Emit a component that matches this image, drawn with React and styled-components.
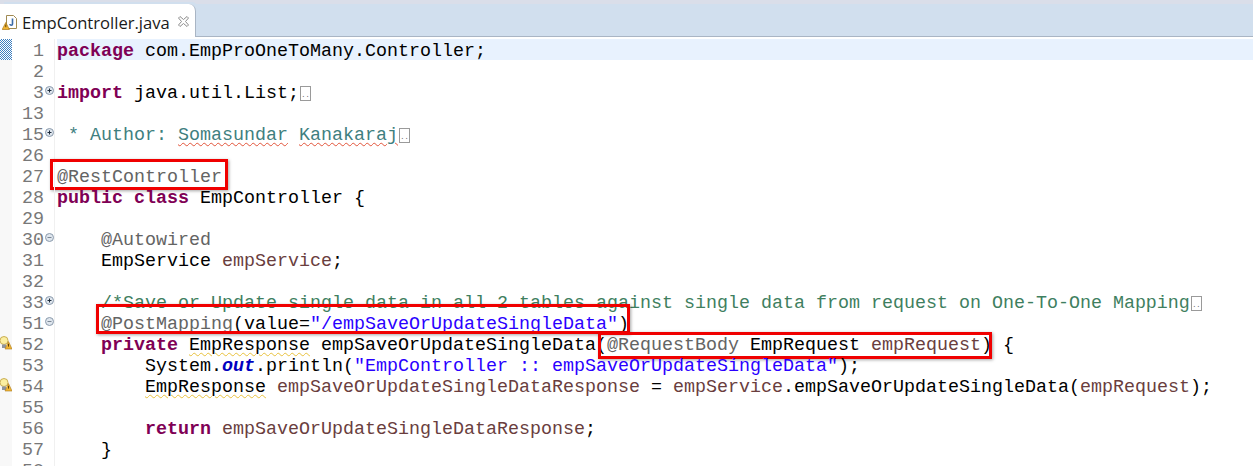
import React from "react"
import styled, { createGlobalStyle } from "styled-components"

const GlobalStyle = createGlobalStyle`
  html, body {
    margin: 0;
    padding: 0;
    background: #fff;
    overflow: hidden;
  }
`

const Editor = styled.div`
  width: 1253px;
  height: 466px;
  overflow: hidden;
  display: flex;
  flex-direction: column;
  background: #fff;
`
const TabStrip = styled.div`
  height: 39px;
  flex: none;
  box-sizing: border-box;
  display: flex;
  align-items: stretch;
  background: #fff;
  border-top: 4px solid #dadee9;
`
const Tab = styled.div`
  width: 196px;
  height: 33px;
  box-sizing: border-box;
  display: flex;
  align-items: center;
  gap: 5px;
  padding: 3px 0 0 2px;
  background: #fff;
  border-right: 1px solid #a9b5c4;
  border-top-right-radius: 7px;
  font-family: "Open Sans", "Liberation Sans", sans-serif;
  font-size: 16.6px;
  color: #1a1a1a;
  box-shadow: 3px -3px 0 -1px #d1dfee;
`
const TabFiller = styled.div`
  flex: 1;
  height: 33px;
  box-sizing: border-box;
  background: #d1dfee;
  border-bottom: 1px solid #a9b5c4;
`
const TabClose = styled.svg`
  width: 11px;
  height: 11px;
  margin-left: 3px;
  margin-top: -2px;
`
const Body = styled.div`
  flex: 1;
  display: flex;
  min-height: 0;
`
const Overview = styled.div`
  width: 12px;
  flex: none;
  background: #f8f8f8;
`
const Hatch = styled.div`
  height: 21px;
  background-color: #fff;
  background-image: conic-gradient(#3d7fc0 25%, #fff 0 50%, #3d7fc0 0 75%, #fff 0);
  background-size: 2px 2px;
`
const Rows = styled.div`
  flex: 1;
  min-width: 0;
`
const Row = styled.div`
  position: relative;
  display: flex;
  height: 21px;
  font-family: "Liberation Mono", "Courier New", monospace;
  font-size: 18.33px;
  line-height: 25px;
  white-space: pre;
  color: #000;
`
const Gutter = styled.div`
  width: 43px;
  flex: none;
  height: 21px;
  box-sizing: border-box;
  display: flex;
  align-items: flex-start;
  justify-content: flex-end;
  padding-right: ${props => (props.$fold ? "0" : "10px")};
  border-right: 1px solid #f0f0f0;
  color: #787878;
`
const FoldButton = styled.svg`
  width: 9px;
  height: 9px;
  flex: none;
  margin: 5px 0 0 1px;
`
const Code = styled.div`
  flex: 1;
  height: 21px;
  margin-left: 2px;
  background: ${props => (props.$current ? "#e8f2fe" : "transparent")};
`
const Keyword = styled.span`
  color: #7f0055;
  font-weight: 700;
`
const Comment = styled.span`
  color: #3f7f5f;
`
const Doc = styled.span`
  color: #3f7f7f;
`
const Annotation = styled.span`
  color: #646464;
`
const Str = styled.span`
  color: #2a00ff;
`
const Field = styled.span`
  color: #0000c0;
  font-weight: 700;
  font-style: italic;
`
const Local = styled.span`
  color: #6a3e3e;
`
const Squiggle = styled.span`
  text-decoration: underline wavy ${props => props.$color};
  text-decoration-thickness: 1px;
  text-underline-offset: 2px;
`
const Folded = styled.span`
  display: inline-flex;
  align-items: flex-end;
  justify-content: center;
  width: 9px;
  height: 13px;
  margin-left: 1px;
  border: 1px solid #9a9a9a;
  vertical-align: 1px;
  font-size: 7px;
  line-height: 9px;
  color: #666;
`
const Boxed = styled.span`
  position: relative;
  &::after {
    content: "";
    position: absolute;
    left: ${props => props.$left}px;
    right: ${props => props.$right}px;
    top: ${props => props.$top}px;
    bottom: ${props => props.$bottom}px;
    border: 3px solid #f00000;
    box-shadow: 1px 1px 3px rgba(0, 0, 0, 0.35);
    pointer-events: none;
  }
`
const MarkerIcon = styled.svg`
  position: absolute;
  left: -12px;
  top: 3px;
  width: 12px;
  height: 14px;
`

const JavaFileIcon = () => (
  <svg width="15" height="15" viewBox="0 0 15 15">
    <path d="M4.5.5h7l3 3v10h-10z" fill="#fff" stroke="#a08a52" />
    <path d="M10.5 3.5v5.5c0 1.6-2.4 1.6-2.6 0" fill="none" stroke="#3a6aa8" strokeWidth="1.6" />
    <path d="M3.8 7.5 7.4 14.5H.2z" fill="#f2b632" stroke="#a9781c" strokeWidth="0.7" />
    <path d="M3.8 9.6v2.6" stroke="#5a3c08" />
  </svg>
)

const Bulb = () => (
  <MarkerIcon viewBox="0 0 12 14">
    <circle cx="4" cy="4.5" r="4" fill="#fbeea0" stroke="#c9ae55" />
    <rect x="2" y="8.5" width="4" height="3.5" fill="#8f949c" />
    <path d="M8.5 5.5 12 13H5z" fill="#f2b632" stroke="#a9781c" strokeWidth="0.6" />
    <path d="M8.5 7.8v2.8" stroke="#5a3c08" />
  </MarkerIcon>
)

const Fold = ({ open }) => (
  <FoldButton viewBox="0 0 9 9">
    <circle cx="4.5" cy="4.5" r="4" fill="#dfe6ee" stroke="#8a9aac" />
    <path d="M2.500 4.500h4" stroke={open ? "#7a8794" : "#1d2c3c"} />
    {!open && <path d="M4.500 2.500v4" stroke="#1d2c3c" />}
  </FoldButton>
)

const Line = ({ num, fold, marker, current, children }) => (
  <Row>
    {marker && <Bulb />}
    <Gutter $fold={!!fold}>
      {num}
      {fold && <Fold open={fold === "open"} />}
    </Gutter>
    <Code $current={current}>{children}</Code>
  </Row>
)

const red = "#e2543a"
const yellow = "#e8c13c"

const App = () => (
  <>
    <GlobalStyle />
    <Editor>
      <TabStrip>
        <Tab>
          <JavaFileIcon />
          EmpController.java
          <TabClose viewBox="0 0 11 11">
            <path
              d="M.5 2 2 .5l3.500 3 3.500-3L10.500 2l-3 3.500 3 3.500L9 10.500l-3.500-3-3.500 3L.5 9l3-3.500z"
              fill="#fff"
              stroke="#8c8c8c"
            />
          </TabClose>
        </Tab>
        <TabFiller />
      </TabStrip>
      <Body>
        <Overview>
          <Hatch />
        </Overview>
        <Rows>
          <Line num="1" current>
            <Keyword>package</Keyword> com.EmpProOneToMany.Controller;
          </Line>
          <Line num="2" />
          <Line num="3" fold="closed">
            <Keyword>import</Keyword> java.util.List;<Folded>..</Folded>
          </Line>
          <Line num="13" />
          <Line num="15" fold="closed">
            <Doc>
              {" * Author: "}
              <Squiggle $color={red}>Somasundar</Squiggle> <Squiggle $color={red}>Kanakaraj</Squiggle>
            </Doc>
            <Folded>..</Folded>
          </Line>
          <Line num="26" />
          <Line num="27">
            <Boxed $left={-7} $right={-6} $top={-8} $bottom={-2}>
              <Annotation>@RestController</Annotation>
            </Boxed>
          </Line>
          <Line num="28">
            <Keyword>public</Keyword> <Keyword>class</Keyword> EmpController {"{"}
          </Line>
          <Line num="29" />
          <Line num="30" fold="open">
            {"    "}
            <Annotation>@Autowired</Annotation>
          </Line>
          <Line num="31">
            {"    "}EmpService <Local>empService</Local>;
          </Line>
          <Line num="32" />
          <Line num="33" fold="closed">
            {"    "}
            <Comment>/*Save or Update single data in all 2 tables against single data from request on One-To-One Mapping</Comment>
            <Folded>..</Folded>
          </Line>
          <Line num="51" fold="open">
            {"    "}
            <Boxed $left={-5} $right={-1} $top={-10} $bottom={1}>
              <Annotation>@PostMapping</Annotation>(value=<Str>"/empSaveOrUpdateSingleData"</Str>)
            </Boxed>
          </Line>
          <Line num="52" marker>
            {"    "}
            <Keyword>private</Keyword> <Squiggle $color={yellow}>EmpResponse</Squiggle> empSaveOrUpdateSingleData
            <Boxed $left={2} $right={0} $top={-3} $bottom={-3}>
              (<Annotation>@RequestBody</Annotation> EmpRequest <Local>empRequest</Local>)
            </Boxed>{" {"}
          </Line>
          <Line num="53">
            {"        "}System.<Field>out</Field>.println(<Str>"EmpController :: empSaveOrUpdateSingleData"</Str>);
          </Line>
          <Line num="54" marker>
            {"        "}
            <Squiggle $color={yellow}>EmpResponse</Squiggle> <Local>empSaveOrUpdateSingleDataResponse</Local> ={" "}
            <Local>empService</Local>.empSaveOrUpdateSingleData(<Local>empRequest</Local>);
          </Line>
          <Line num="55" />
          <Line num="56">
            {"        "}
            <Keyword>return</Keyword> <Local>empSaveOrUpdateSingleDataResponse</Local>;
          </Line>
          <Line num="57">{"    }"}</Line>
          <Line num="58" />
        </Rows>
      </Body>
    </Editor>
  </>
)

export default App
